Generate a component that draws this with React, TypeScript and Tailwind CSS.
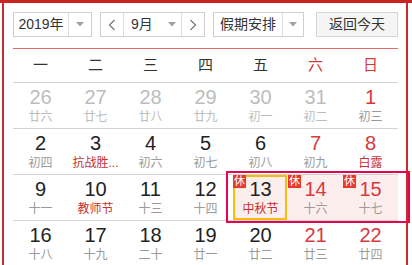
import React from "react";

type Day = {
  n: number;
  l: string;
  prev?: boolean;
  redN?: boolean;
  redL?: boolean;
  rest?: boolean;
  today?: boolean;
};

const rows: Day[][] = [
  [
    { n: 26, l: "廿六", prev: true },
    { n: 27, l: "廿七", prev: true },
    { n: 28, l: "廿八", prev: true },
    { n: 29, l: "廿九", prev: true },
    { n: 30, l: "初一", prev: true },
    { n: 31, l: "初二", prev: true },
    { n: 1, l: "初三", redN: true },
  ],
  [
    { n: 2, l: "初四" },
    { n: 3, l: "抗战胜...", redL: true },
    { n: 4, l: "初六" },
    { n: 5, l: "初七" },
    { n: 6, l: "初八" },
    { n: 7, l: "初九", redN: true },
    { n: 8, l: "白露", redN: true, redL: true },
  ],
  [
    { n: 9, l: "十一" },
    { n: 10, l: "教师节", redL: true },
    { n: 11, l: "十三" },
    { n: 12, l: "十四" },
    { n: 13, l: "中秋节", redL: true, rest: true, today: true },
    { n: 14, l: "十六", redN: true, rest: true },
    { n: 15, l: "十七", redN: true, rest: true },
  ],
  [
    { n: 16, l: "十八" },
    { n: 17, l: "十九" },
    { n: 18, l: "二十" },
    { n: 19, l: "廿一" },
    { n: 20, l: "廿二" },
    { n: 21, l: "廿三", redN: true },
    { n: 22, l: "廿四", redN: true },
  ],
];

const weekdays = ["一", "二", "三", "四", "五", "六", "日"];

function Caret() {
  return (
    <svg width="8" height="5" viewBox="0 0 8 5">
      <path d="M0 0 L8 0 L4 4.5 Z" fill="#a0a0a0" />
    </svg>
  );
}

function Chevron({ dir }: { dir: "l" | "r" }) {
  return (
    <svg width="8" height="12" viewBox="0 0 8 12">
      <polyline
        points={dir === "l" ? "6.5,1 1.5,6 6.5,11" : "1.5,1 6.5,6 1.5,11"}
        fill="none"
        stroke="#777"
        strokeWidth="1.2"
      />
    </svg>
  );
}

export default function App() {
  return (
    <div
      className="w-[412px] h-[265px] overflow-hidden bg-white text-[#333]"
      style={{ fontFamily: '"Liberation Sans", "Noto Sans CJK SC", sans-serif' }}
    >
      <div className="h-[3px] bg-[#c9231f]" />
      <div className="relative ml-[2px] w-[406px] h-[262px] border-x-2 border-[#c42b2b] pl-[9px] pr-[8px]">
        {/* header */}
        <div className="pt-[9px] flex h-[34px] items-stretch">
          <div className="w-[79px] h-[25px] flex border border-[#cfcfcf] bg-white">
            <div className="w-[55px] flex items-center justify-center text-[14px] border-r border-[#dcdcdc]">
              2019年
            </div>
            <div className="flex-1 flex items-center justify-center">
              <Caret />
            </div>
          </div>
          <div className="ml-[8px] w-[105px] h-[25px] flex border border-[#cfcfcf] bg-white">
            <div className="w-[23px] flex items-center justify-center border-r border-[#dcdcdc]">
              <Chevron dir="l" />
            </div>
            <div className="flex-1 flex items-center pl-[7px] text-[14px]">
              <span>9月</span>
              <span className="ml-[15px] flex">
                <Caret />
              </span>
            </div>
            <div className="w-[23px] flex items-center justify-center border-l border-[#dcdcdc]">
              <Chevron dir="r" />
            </div>
          </div>
          <div className="ml-[8px] w-[91px] h-[25px] flex border border-[#cfcfcf] bg-white">
            <div className="w-[69px] flex items-center justify-center text-[14px] border-r border-[#dcdcdc]">
              假期安排
            </div>
            <div className="flex-1 flex items-center justify-center">
              <Caret />
            </div>
          </div>
          <div className="ml-[12px] w-[82px] h-[25px] flex items-center justify-center border border-[#d5d5d5] bg-[#f5f5f5] text-[14px]">
            返回今天
          </div>
        </div>
        <div className="mt-[11px] h-px bg-[#e36a6a]" />

        {/* weekday row */}
        <div className="grid grid-cols-7 h-[34px] border-b border-[#d3d3d3]">
          {weekdays.map((w, i) => (
            <div
              key={w}
              className={`flex items-center justify-center text-[15px] ${
                i >= 5 ? "text-[#d0393e]" : "text-[#333]"
              }`}
            >
              {w}
            </div>
          ))}
        </div>

        {/* days */}
        {rows.map((row, ri) => (
          <div key={ri} className="grid grid-cols-7 h-[46px] border-b border-[#d3d3d3]">
            {row.map((d) => (
              <div
                key={d.n}
                className={`relative flex flex-col items-center pt-[4px] ${
                  d.rest ? "bg-[#fdeeee]" : ""
                }`}
              >
                <div
                  className={`text-[20px] leading-[20px] ${
                    d.prev ? "text-[#bdbdbd]" : d.redN ? "text-[#d9383e]" : "text-[#222]"
                  }`}
                >
                  {d.n}
                </div>
                <div
                  className={`mt-[2px] text-[12px] leading-[16px] whitespace-nowrap ${
                    d.prev ? "text-[#bdbdbd]" : d.redL ? "text-[#c8302f]" : "text-[#9a9a9a]"
                  }`}
                >
                  {d.l}
                </div>
                {d.today && (
                  <div className="absolute top-0 left-0 right-[1px] bottom-0 border-[2.5px] border-[#f5bd0f]" />
                )}
                {d.rest && (
                  <div className="absolute top-0 left-0 w-[13px] h-[13px] bg-[#e8392b] text-white text-[11px] leading-[13px] text-center">
                    休
                  </div>
                )}
              </div>
            ))}
          </div>
        ))}

        {/* holiday highlight */}
        <div className="absolute left-[222px] top-[168px] w-[184px] h-[52px] border-2 border-[#e4064d] pointer-events-none" />
      </div>
    </div>
  );
}
